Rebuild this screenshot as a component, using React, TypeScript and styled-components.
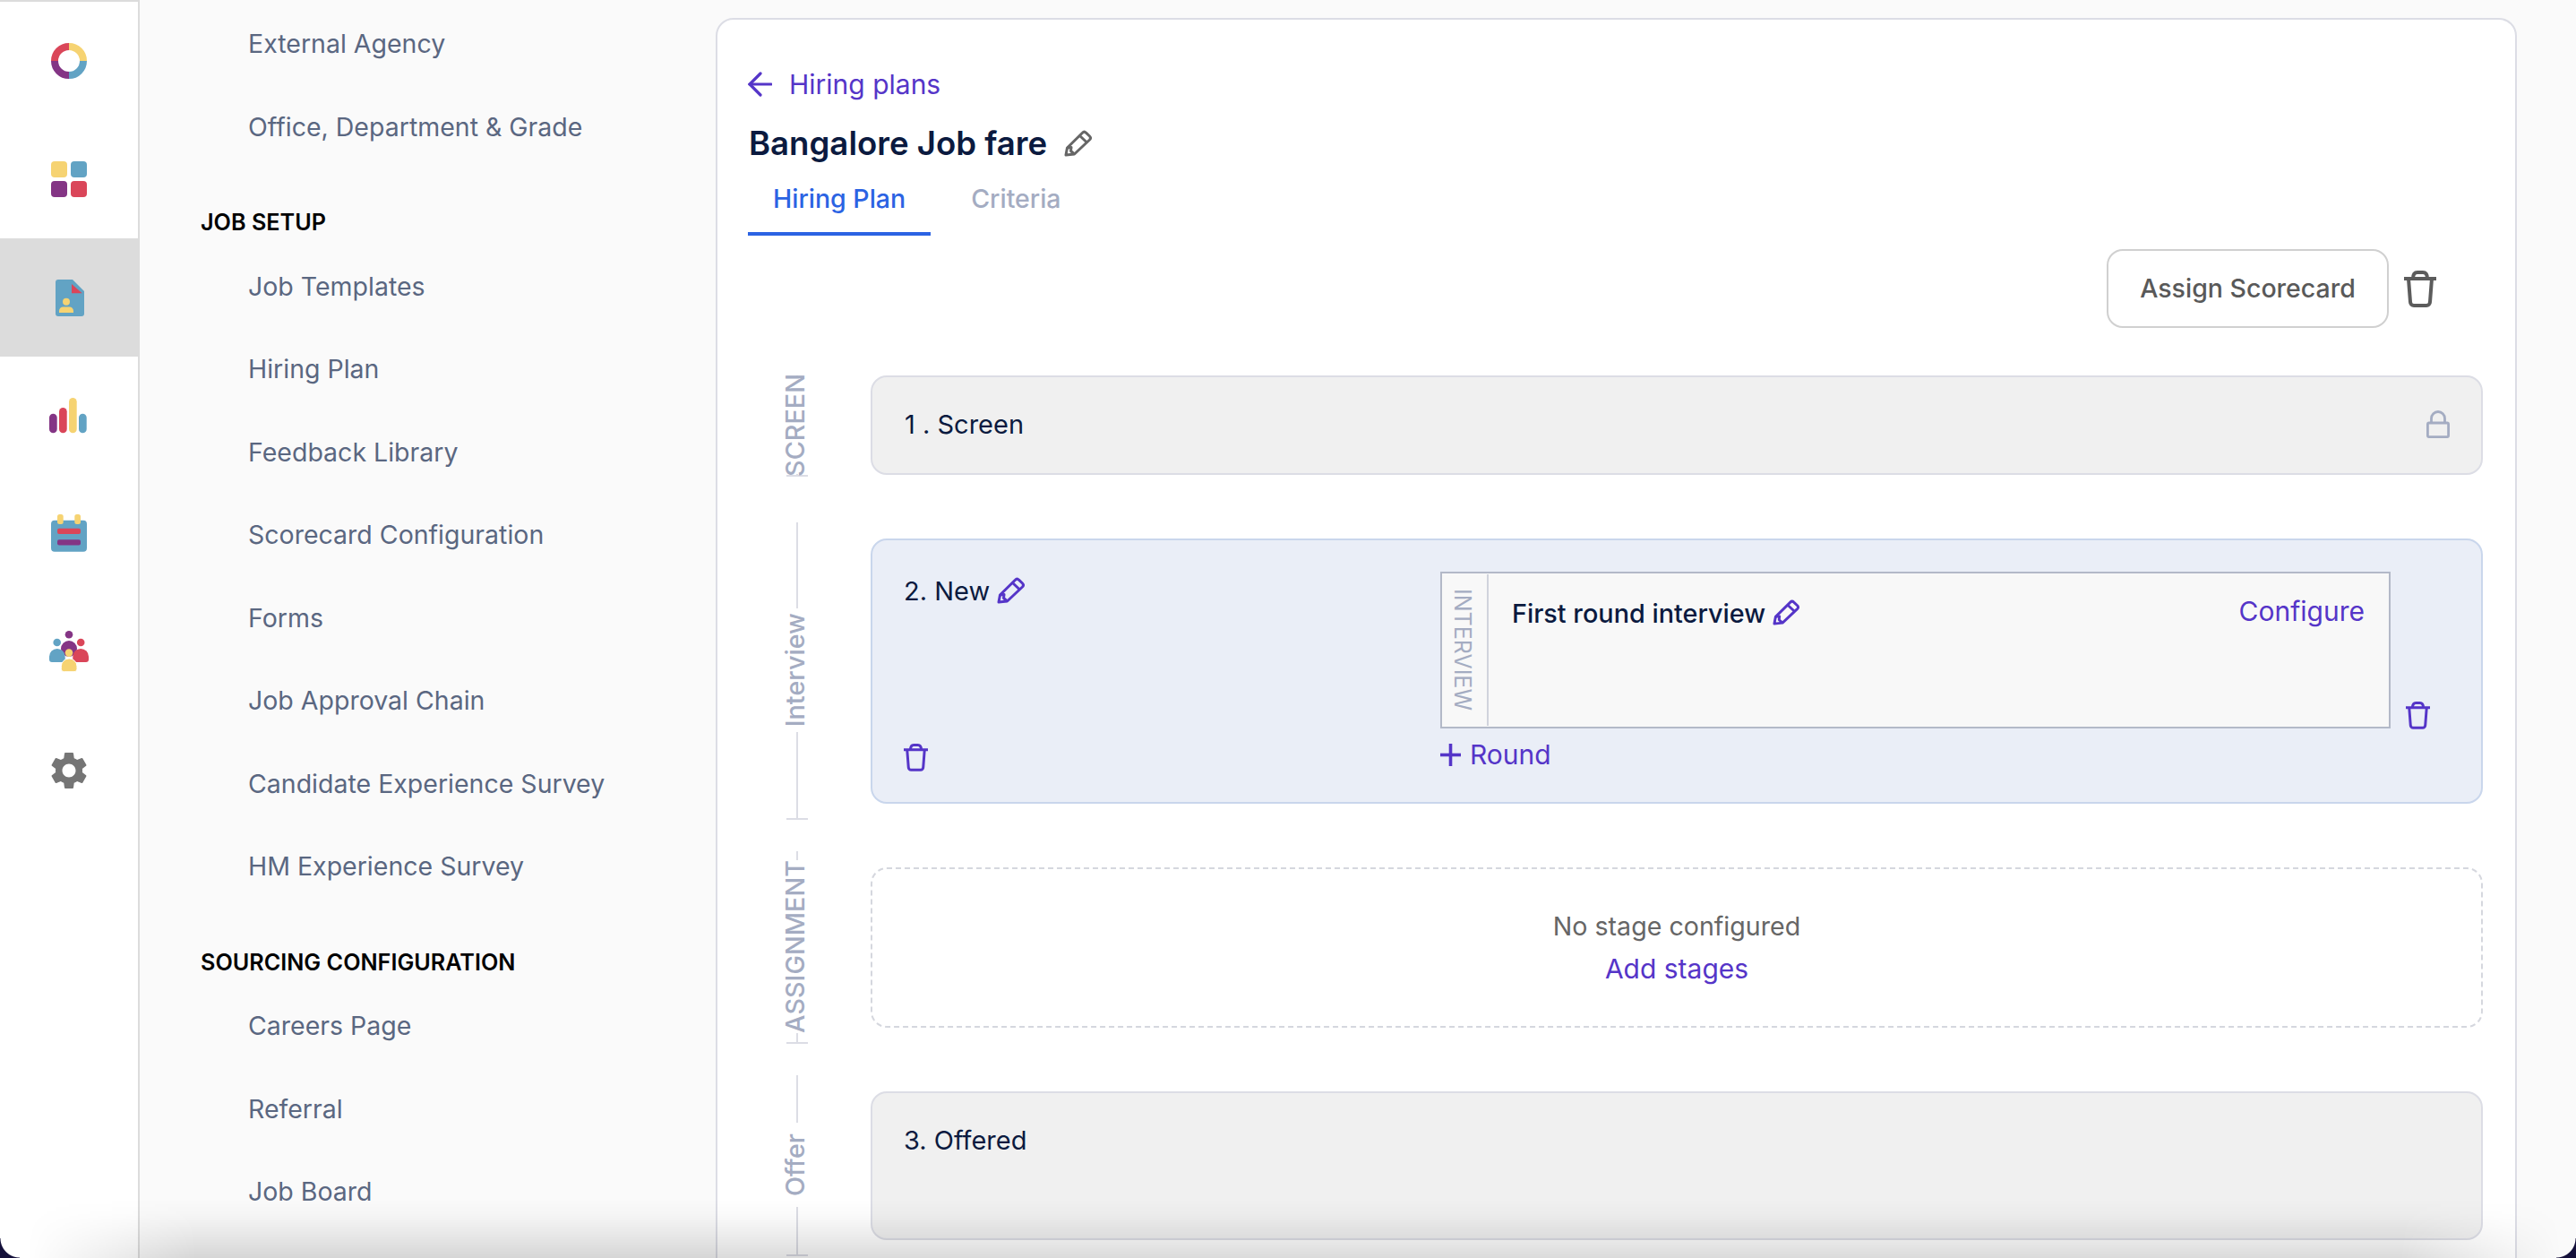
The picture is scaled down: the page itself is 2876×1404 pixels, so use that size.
import React from 'react';
import styled, { createGlobalStyle } from 'styled-components';
import { MdSettings } from 'react-icons/md';

// == constants ====================================================================================
const Colors = {
  yellow: '#f6d372',
  blue: '#62a3c4',
  purple: '#843585',
  red: '#da4659',
  link: '#5535c8',
  ink: '#0b1a3f',
  muted: '#a4acc2',
  line: '#dcdde5',
};

const FONT = '"Inter", "Lato", sans-serif';

// == styles =======================================================================================
const Global = createGlobalStyle`
  html, body {
    margin: 0;
    padding: 0;
    background: #fafafa;
  }
  body {
    font-family: ${ FONT };
    font-size: 29px;
  }
`;

const Page = styled.div`
  position: relative;
  display: flex;
  width: 2876px;
  height: 1404px;
  overflow: hidden;
  background: #fafafa;
`;

const Rail = styled.nav`
  flex: none;
  box-sizing: border-box;
  width: 156px;
  height: 100%;
  padding-top: 2px;
  background: #fff;
  border-right: 2px solid #dcdcdc;
  box-shadow: inset 0 2px 0 #dcdcdc;
`;

const RailItem = styled.div<{ $active?: boolean }>`
  display: flex;
  align-items: center;
  justify-content: center;
  height: 132px;
  margin-right: ${ ( { $active } ) => ( $active ? '-2px' : '0' ) };
  background: ${ ( { $active } ) => ( $active ? '#dcdcdc' : 'transparent' ) };
`;

const Sidebar = styled.aside`
  flex: none;
  box-sizing: border-box;
  width: 642px;
  padding-top: 2.5px;
`;

const SideHeading = styled.div`
  display: flex;
  align-items: center;
  height: 50px;
  margin: 35.5px 0 0 68px;
  font-size: 25.2px;
  font-weight: 600;
  color: #000;
`;

const SideItem = styled.div`
  display: flex;
  align-items: center;
  height: 92.5px;
  padding-left: 121px;
  font-size: 28.5px;
  color: #5a6781;
`;

const Main = styled.main`
  flex: 1;
  min-width: 0;
  padding: 20px 66px 0 1px;
`;

const Panel = styled.section`
  box-sizing: border-box;
  height: 1500px;
  padding: 54px 36px 0 34px;
  background: #fff;
  border: 2px solid ${ Colors.line };
  border-radius: 20px;
`;

const BackLink = styled.div`
  display: flex;
  align-items: center;
  gap: 19px;
  height: 36px;
  font-size: 30px;
  color: ${ Colors.link };
`;

const TitleRow = styled.div`
  display: flex;
  align-items: center;
  gap: 19px;
  height: 44px;
  margin: 26px 0 0 1px;
`;

const Title = styled.h1`
  margin: 0;
  font-size: 36.6px;
  font-weight: 600;
  color: ${ Colors.ink };
`;

const Tabs = styled.div`
  display: flex;
  gap: 45px;
  margin-top: 13px;
`;

const Tab = styled.div<{ $active?: boolean }>`
  display: flex;
  align-items: center;
  box-sizing: border-box;
  height: 68px;
  padding: ${ ( { $active } ) => ( $active ? '0 28px 12px' : '0 0 12px' ) };
  font-size: 28.5px;
  font-weight: 500;
  color: ${ ( { $active } ) => ( $active ? '#2b63e3' : Colors.muted ) };
  border-bottom: 4px solid ${ ( { $active } ) => ( $active ? '#2b63e3' : 'transparent' ) };
`;

const Actions = styled.div`
  display: flex;
  align-items: center;
  justify-content: flex-end;
  gap: 17px;
  margin-top: 15px;
  padding-right: 52px;
`;

const OutlineButton = styled.button`
  box-sizing: border-box;
  width: 315px;
  height: 88px;
  padding: 0 0 2px;
  font-family: inherit;
  font-size: 28.5px;
  font-weight: 500;
  color: #595959;
  background: #fff;
  border: 2px solid #d0d0d0;
  border-radius: 18px;
`;

const Stages = styled.div`
  display: flex;
  flex-direction: column;
  gap: 35px;
  margin-top: 35px;
  padding-left: 43px;
`;

const StageRow = styled.div`
  display: flex;
  gap: 70px;
`;

const Legend = styled.div<{ $tight?: boolean }>`
  display: flex;
  flex: none;
  flex-direction: column;
  align-items: center;
  box-sizing: border-box;
  width: 24px;
  margin: ${ ( { $tight } ) => ( $tight ? '18px 0 16px' : '0' ) };
  border-bottom: 2px solid ${ Colors.line };
`;

const LegendLine = styled.span`
  flex: 1;
  width: 2px;
  min-height: 0;
  background: ${ Colors.line };
`;

const LegendText = styled.span<{ $gap: number }>`
  margin: ${ ( { $gap } ) => $gap }px 0;
  writing-mode: vertical-rl;
  transform: translateX(-2px) rotate(180deg);
  font-size: 28.8px;
  line-height: 24px;
  font-weight: 500;
  white-space: nowrap;
  color: ${ Colors.muted };
`;

const Slot = styled.div`
  flex: 1;
  min-width: 0;
  padding: 18px 0;
`;

const LockedCard = styled.div`
  display: flex;
  align-items: center;
  justify-content: space-between;
  box-sizing: border-box;
  height: 111px;
  padding: 0 35px 2px 36px;
  color: ${ Colors.ink };
  background: #f0f0f0;
  border: 2px solid ${ Colors.line };
  border-radius: 18px;
`;

const OfferCard = styled.div`
  box-sizing: border-box;
  height: 166px;
  padding: 35px 35px 0;
  color: ${ Colors.ink };
  background: #f0f0f0;
  border: 2px solid ${ Colors.line };
  border-radius: 18px;
`;

const InterviewCard = styled.div`
  display: grid;
  grid-template-columns: 599px 1061px 44px;
  grid-template-rows: 175px auto;
  box-sizing: border-box;
  height: 296px;
  padding: 35px 0 0 35px;
  color: ${ Colors.ink };
  background: #eaeef7;
  border: 2px solid #c9d6ec;
  border-radius: 18px;
`;

const CardColumn = styled.div`
  display: flex;
  grid-row: 1 / 3;
  flex-direction: column;
  justify-content: space-between;
  padding: 3px 0 34px;
`;

const StageName = styled.div`
  display: flex;
  align-items: center;
  gap: 8px;
  height: 36px;
`;

const RoundBox = styled.div`
  display: flex;
  box-sizing: border-box;
  background: #f8f8f8;
  border: 2px solid #b3b9c8;
`;

const RoundStrip = styled.div`
  display: flex;
  flex: none;
  align-items: center;
  justify-content: center;
  box-sizing: border-box;
  width: 52px;
  padding-right: 4px;
  margin: 1px 0;
  border-right: 2px solid #d0d3dc;
`;

const RoundStripText = styled.span`
  writing-mode: vertical-rl;
  font-size: 25px;
  color: ${ Colors.muted };
`;

const RoundBody = styled.div`
  display: flex;
  flex: 1;
  align-items: flex-start;
  justify-content: space-between;
  padding: 24px 27px 0 26px;
`;

const RoundName = styled.div`
  display: flex;
  align-items: center;
  gap: 8px;
  height: 36px;
  margin-top: 2px;
  font-size: 28.8px;
  font-weight: 500;
`;

const TextLink = styled.span`
  font-size: 30px;
  color: ${ Colors.link };
`;

const RoundTrash = styled.div`
  display: flex;
  align-items: flex-end;
  justify-content: flex-end;
  margin-bottom: -1px;
`;

const AddRound = styled.div`
  display: flex;
  grid-column: 2;
  align-items: center;
  gap: 10px;
  height: 36px;
  margin-top: 11px;
  font-size: 30px;
  color: ${ Colors.link };
`;

const EmptyCard = styled.div`
  display: flex;
  flex-direction: column;
  align-items: center;
  justify-content: center;
  gap: 11px;
  box-sizing: border-box;
  height: 179px;
  font-size: 28.6px;
  color: #666;
  line-height: 36px;
  border: 2px dashed #d5d7de;
  border-radius: 18px;
`;

const BottomShade = styled.div`
  position: absolute;
  right: 0;
  bottom: 0;
  left: 0;
  height: 66px;
  pointer-events: none;
  background: linear-gradient(
    to top,
    rgba(0, 0, 0, 0.14),
    rgba(0, 0, 0, 0.07) 40%,
    rgba(0, 0, 0, 0.02) 72%,
    rgba(0, 0, 0, 0)
  );
  -webkit-mask-image: linear-gradient(to right, transparent 30px, #000 220px, #000 2680px, transparent 2860px);
  mask-image: linear-gradient(to right, transparent 30px, #000 220px, #000 2680px, transparent 2860px);
`;

const WindowCorner = styled.div<{ $side: 'left' | 'right' }>`
  position: absolute;
  bottom: 0;
  ${ ( { $side } ) => $side }: 0;
  width: 22px;
  height: 22px;
  pointer-events: none;
  background: radial-gradient(
    circle at ${ ( { $side } ) => ( $side === 'left' ? '100% 0' : '0 0' ) },
    transparent 21px,
    #14103a 22px
  );
`;

// == icons ========================================================================================
const RailSvg = ( { children }: { children: React.ReactNode } ) => (
  <svg width="48" height="48" viewBox="0 0 48 48">{ children }</svg>
);

const LogoIcon = () => (
  <RailSvg>
    <g fill="none" strokeWidth="8">
      <path d="M24 8A16 16 0 0 1 40 24" stroke={ Colors.yellow } />
      <path d="M40 24A16 16 0 0 1 24 40" stroke={ Colors.blue } />
      <path d="M24 40A16 16 0 0 1 8 24" stroke={ Colors.purple } />
      <path d="M8 24A16 16 0 0 1 24 8" stroke={ Colors.red } />
    </g>
  </RailSvg>
);

const AppsIcon = () => (
  <RailSvg>
    <rect x="4" y="4" width="18" height="18" rx="4" fill={ Colors.yellow } />
    <rect x="26" y="4" width="18" height="18" rx="4" fill={ Colors.blue } />
    <rect x="4" y="26" width="18" height="18" rx="4" fill={ Colors.purple } />
    <rect x="26" y="26" width="18" height="18" rx="4" fill={ Colors.red } />
  </RailSvg>
);

const JobIcon = () => (
  <RailSvg>
    <path d="M11 4H27L40 17V42a3 3 0 0 1-3 3H11a3 3 0 0 1-3-3V7a3 3 0 0 1 3-3Z" fill={ Colors.blue } />
    <path d="M26 9L37.7 19.3H26Z" fill={ Colors.red } />
    <circle cx="20" cy="28.7" r="4" fill={ Colors.yellow } />
    <path d="M12 41v-2a4.5 4.5 0 0 1 4.5-4.5h7a4.5 4.5 0 0 1 4.5 4.5v2Z" fill={ Colors.yellow } />
  </RailSvg>
);

const ChartIcon = () => (
  <RailSvg>
    <rect x="2" y="21.7" width="8.7" height="21.6" rx="4.35" fill={ Colors.purple } />
    <rect x="13" y="15" width="8.7" height="28.3" rx="4.35" fill={ Colors.red } />
    <rect x="24" y="4" width="8.7" height="39.3" rx="4.35" fill={ Colors.yellow } />
    <rect x="35" y="21.7" width="8.7" height="21.6" rx="4.35" fill={ Colors.blue } />
  </RailSvg>
);

const CalendarIcon = () => (
  <RailSvg>
    <rect x="4" y="8.7" width="40" height="35" rx="4" fill={ Colors.blue } />
    <rect x="11" y="2" width="6.7" height="11" rx="2.5" fill={ Colors.yellow } />
    <rect x="30.3" y="2" width="6.7" height="11" rx="2.5" fill={ Colors.yellow } />
    <rect x="11" y="17.7" width="26" height="6.3" rx="2" fill={ Colors.red } />
    <rect x="11" y="30.3" width="26" height="6.3" rx="2" fill={ Colors.purple } />
  </RailSvg>
);

const TeamIcon = () => (
  <RailSvg>
    <circle cx="24" cy="4.3" r="4.3" fill={ Colors.purple } />
    <circle cx="24" cy="20" r="9" fill={ Colors.purple } />
    <circle cx="10.7" cy="13" r="4.3" fill={ Colors.blue } />
    <path d="M2 32V28.8a8.85 8.85 0 0 1 17.7 0V32a3 3 0 0 1-3 3H5a3 3 0 0 1-3-3Z" fill={ Colors.blue } />
    <circle cx="37.2" cy="13" r="4.3" fill={ Colors.red } />
    <path d="M28.3 32V28.8a8.85 8.85 0 0 1 17.7 0V32a3 3 0 0 1-3 3H31.3a3 3 0 0 1-3-3Z" fill={ Colors.red } />
    <path d="M15.3 42.7V39.8a8.85 8.85 0 0 1 17.7 0V42.7a3 3 0 0 1-3 3H18.3a3 3 0 0 1-3-3Z" fill={ Colors.yellow } stroke="#fff" strokeWidth="1" />
    <circle cx="24" cy="24.6" r="4.3" fill={ Colors.yellow } />
  </RailSvg>
);

const TrashIcon = ( { color, size }: { color: string; size: number } ) => (
  <svg width={ size } height={ size * 41 / 36 } viewBox="0 0 36 41" fill="none" stroke={ color } strokeWidth="4" strokeLinejoin="round">
    <path d="M0 9H36" />
    <path d="M10 9C10 5 11 2 15 2H21C25 2 26 5 26 9" />
    <path d="M5 9L7 35a4 4 0 0 0 4 4H25a4 4 0 0 0 4-4L31 9" />
  </svg>
);

const PencilIcon = ( { color, width = 31 }: { color: string; width?: number } ) => (
  <svg width={ width } height={ width * 30 / 31 } viewBox="0 0 31 30" fill="none" stroke={ color } strokeWidth="3" strokeLinejoin="round">
    <path d="M2 28L3.5 20L20.5 3.2Q22.5 1.2 24.5 3.2L28.5 7Q30.5 9 28.5 11L11.5 27Z" />
    <path d="M17.5 6.5L25.5 14" />
    <path d="M3.5 20L8 19.5L7.5 23.5L11.5 27" />
  </svg>
);

const LockIcon = () => (
  <svg width="26" height="31" viewBox="0 0 26 31" fill="none" stroke={ Colors.muted } strokeWidth="2.8" strokeLinejoin="round">
    <rect x="1.4" y="14" width="23.2" height="15.6" rx="1.5" />
    <path d="M5.5 14V9a7.5 7.5 0 0 1 15 0V14" />
  </svg>
);

const BackArrow = () => (
  <svg width="27" height="28" viewBox="0 0 27 28" fill="none" stroke={ Colors.link } strokeWidth="3.2" strokeLinecap="round">
    <path d="M2 14H26" />
    <path d="M14 2L2 14L14 26" />
  </svg>
);

const PlusIcon = () => (
  <svg width="23" height="25" viewBox="0 0 23 25" fill="none" stroke={ Colors.link } strokeWidth="3.6">
    <path d="M0 12.5H23" />
    <path d="M11.5 0V25" />
  </svg>
);

// == data =========================================================================================
const railIcons = [
  <LogoIcon key="logo" />,
  <AppsIcon key="apps" />,
  <JobIcon key="job" />,
  <ChartIcon key="chart" />,
  <CalendarIcon key="calendar" />,
  <TeamIcon key="team" />,
  <MdSettings key="settings" size={ 50 } color="#757575" />,
];

const sideGroups = [
  { items: [ 'External Agency', 'Office, Department & Grade' ] },
  {
    heading: 'JOB SETUP',
    items: [
      'Job Templates',
      'Hiring Plan',
      'Feedback Library',
      'Scorecard Configuration',
      'Forms',
      'Job Approval Chain',
      'Candidate Experience Survey',
      'HM Experience Survey',
    ],
  },
  { heading: 'SOURCING CONFIGURATION', items: [ 'Careers Page', 'Referral', 'Job Board' ] },
];

// == components ===================================================================================
function StageLegend( { label, gap, tight }: { label: string; gap: number; tight?: boolean } ) {
  return (
    <Legend $tight={ tight }>
      <LegendLine />
      <LegendText $gap={ gap }>{ label }</LegendText>
      <LegendLine />
    </Legend>
  );
}

export default function App() {
  return (
    <Page>
      <Global />
      <Rail>
        { railIcons.map( ( icon, i ) => (
          <RailItem key={ i } $active={ i === 2 }>{ icon }</RailItem>
        ) ) }
      </Rail>

      <Sidebar>
        { sideGroups.map( ( group ) => (
          <React.Fragment key={ group.items[ 0 ] }>
            { group.heading && <SideHeading>{ group.heading }</SideHeading> }
            { group.items.map( ( item ) => <SideItem key={ item }>{ item }</SideItem> ) }
          </React.Fragment>
        ) ) }
      </Sidebar>

      <Main>
        <Panel>
          <BackLink><BackArrow />Hiring plans</BackLink>
          <TitleRow>
            <Title>Bangalore Job fare</Title>
            <PencilIcon color="#666" />
          </TitleRow>
          <Tabs>
            <Tab $active>Hiring Plan</Tab>
            <Tab>Criteria</Tab>
          </Tabs>
          <Actions>
            <OutlineButton>Assign Scorecard</OutlineButton>
            <TrashIcon color="#5c5c5c" size={ 36 } />
          </Actions>

          <Stages>
            <StageRow>
              <StageLegend label="SCREEN" gap={ -3 } tight />
              <Slot>
                <LockedCard>
                  1 . Screen
                  <LockIcon />
                </LockedCard>
              </Slot>
            </StageRow>

            <StageRow>
              <StageLegend label="Interview" gap={ 5 } />
              <Slot>
                <InterviewCard>
                  <CardColumn>
                    <StageName>2. New <PencilIcon color={ Colors.link } /></StageName>
                    <TrashIcon color={ Colors.link } size={ 27 } />
                  </CardColumn>
                  <RoundBox>
                    <RoundStrip><RoundStripText>INTERVIEW</RoundStripText></RoundStrip>
                    <RoundBody>
                      <RoundName>First round interview <PencilIcon color={ Colors.link } width={ 30 } /></RoundName>
                      <TextLink>Configure</TextLink>
                    </RoundBody>
                  </RoundBox>
                  <RoundTrash><TrashIcon color={ Colors.link } size={ 27 } /></RoundTrash>
                  <AddRound><PlusIcon />Round</AddRound>
                </InterviewCard>
              </Slot>
            </StageRow>

            <StageRow>
              <StageLegend label="ASSIGNMENT" gap={ 0 } />
              <Slot>
                <EmptyCard>
                  <span>No stage configured</span>
                  <TextLink>Add stages</TextLink>
                </EmptyCard>
              </Slot>
            </StageRow>

            <StageRow>
              <StageLegend label="Offer" gap={ 12 } />
              <Slot>
                <OfferCard>3. Offered</OfferCard>
              </Slot>
            </StageRow>
          </Stages>
        </Panel>
      </Main>

      <BottomShade />
      <WindowCorner $side="left" />
      <WindowCorner $side="right" />
    </Page>
  );
}
